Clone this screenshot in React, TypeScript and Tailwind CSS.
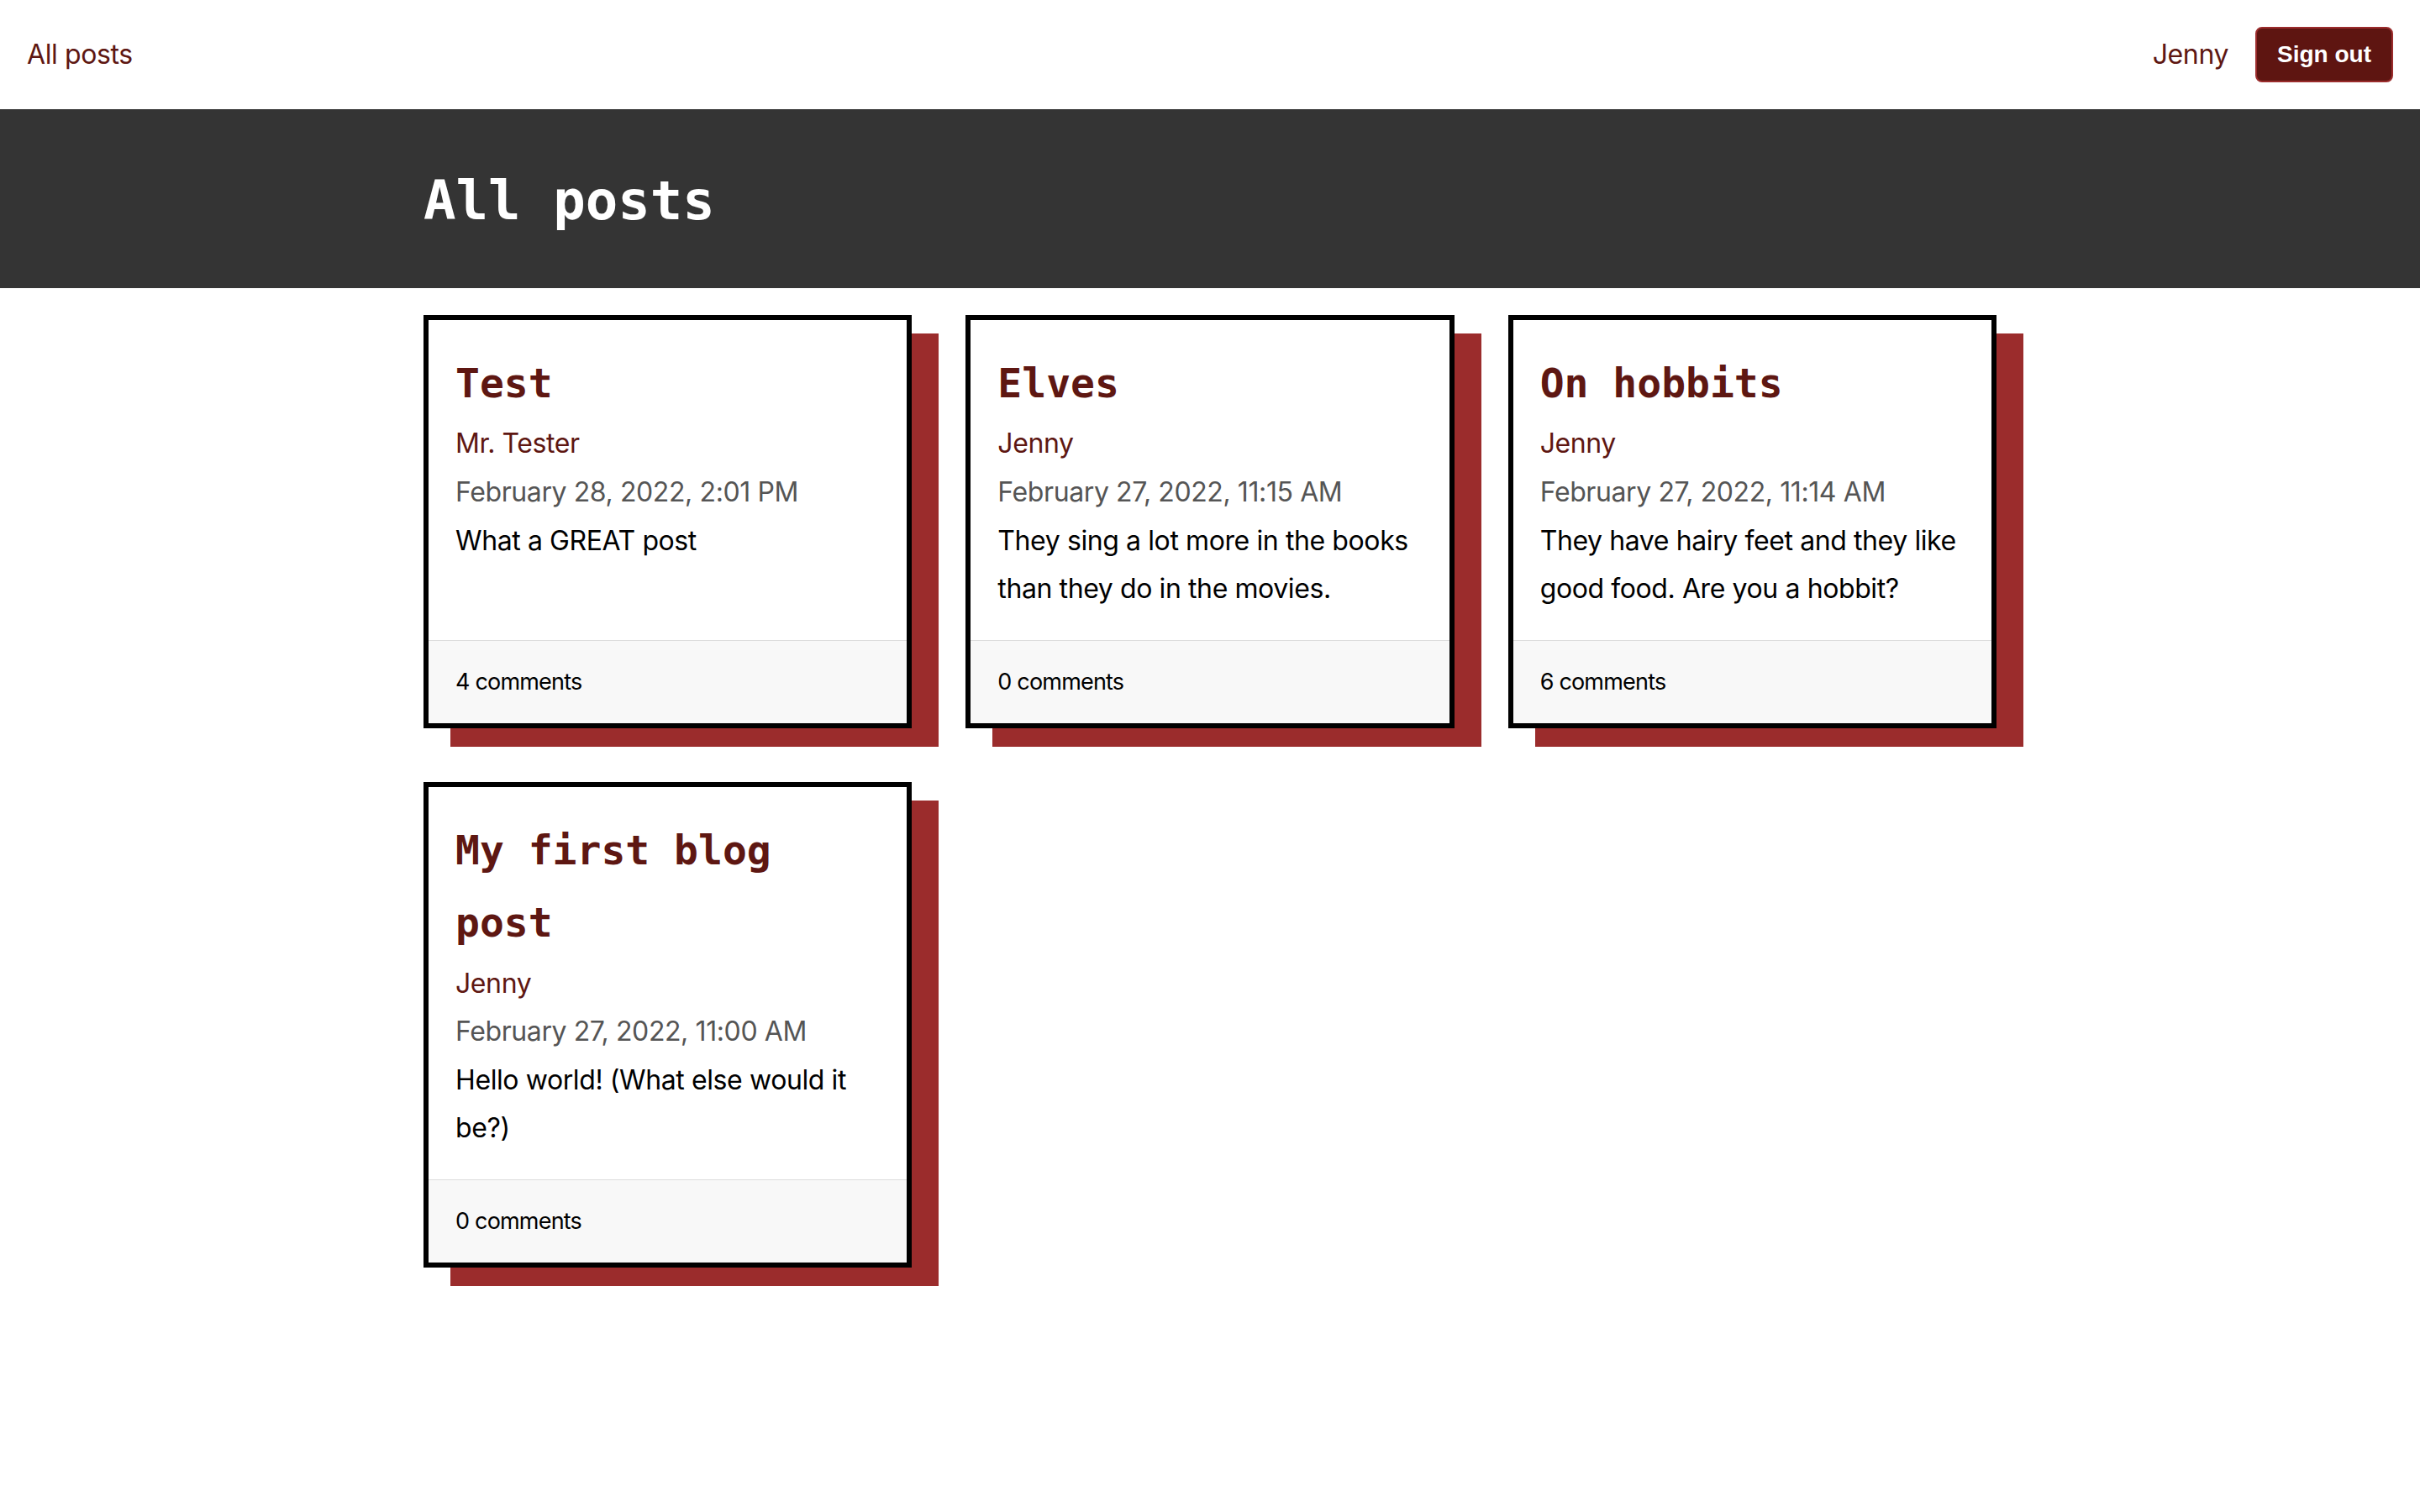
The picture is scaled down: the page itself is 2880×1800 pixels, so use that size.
import React from "react";

type Post = {
  title: string;
  author: string;
  date: string;
  body: string;
  comments: number;
};

const posts: Post[] = [
  {
    title: "Test",
    author: "Mr. Tester",
    date: "February 28, 2022, 2:01 PM",
    body: "What a GREAT post",
    comments: 4,
  },
  {
    title: "Elves",
    author: "Jenny",
    date: "February 27, 2022, 11:15 AM",
    body: "They sing a lot more in the books than they do in the movies.",
    comments: 0,
  },
  {
    title: "On hobbits",
    author: "Jenny",
    date: "February 27, 2022, 11:14 AM",
    body: "They have hairy feet and they like good food. Are you a hobbit?",
    comments: 6,
  },
  {
    title: "My first blog post",
    author: "Jenny",
    date: "February 27, 2022, 11:00 AM",
    body: "Hello world! (What else would it be?)",
    comments: 0,
  },
];

function Card({ post }: { post: Post }) {
  return (
    <div className="flex flex-col border-[6px] border-black bg-white shadow-[32px_22px_0_0_#9b2c2c]">
      <div className="flex-1 p-[32px]">
        <h2 className="font-['DejaVu_Sans_Mono',monospace] text-[48px] leading-[1.8] font-bold tracking-normal text-[#5e1712]">
          {post.title}
        </h2>
        <div className="text-[32px] leading-[1.8] text-[#5e1712]">{post.author}</div>
        <div className="text-[32px] leading-[1.8] text-[#555555]">{post.date}</div>
        <p className="text-[32px] leading-[1.8] text-black">{post.body}</p>
      </div>
      <div className="border-t border-[#dddddd] bg-[#f8f8f8] px-[32px] py-[24px] text-[27px] leading-[50px] tracking-[-0.03em] text-black">
        {post.comments} comments
      </div>
    </div>
  );
}

export default function App() {
  return (
    <div className="min-h-screen bg-white font-['Inter',sans-serif] tracking-[-0.025em] text-black">
      <nav className="flex h-[130px] items-center justify-between px-[32px]">
        <a className="text-[32px] text-[#5e1712]">All posts</a>
        <div className="flex items-center gap-[32px]">
          <span className="text-[32px] text-[#5e1712]">Jenny</span>
          <button className="rounded-[8px] border-2 border-[#9b2c2c] bg-[#5e1511] px-[24px] py-[6px] font-['Liberation_Sans',sans-serif] text-[28px] leading-[1.8] font-bold tracking-normal text-white">
            Sign out
          </button>
        </div>
      </nav>
      <header className="flex h-[213px] items-center bg-[#343434] pt-[4px]">
        <h1 className="mx-auto w-[1872px] font-['DejaVu_Sans_Mono',monospace] text-[64px] font-bold tracking-normal text-white">
          All posts
        </h1>
      </header>
      <main className="mx-auto mt-[32px] grid w-[1872px] grid-cols-3 gap-[64px] pb-[64px]">
        {posts.map((p) => (
          <Card key={p.title} post={p} />
        ))}
      </main>
    </div>
  );
}
